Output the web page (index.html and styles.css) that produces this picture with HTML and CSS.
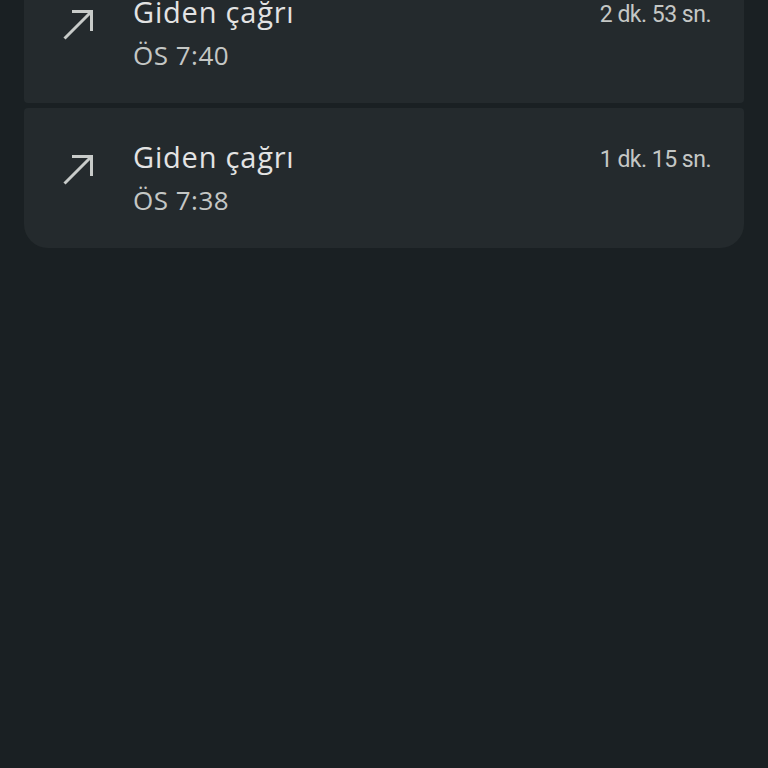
FILE: index.html
```html
<!DOCTYPE html>
<html lang="tr">
<head>
<meta charset="utf-8">
<link rel="stylesheet" href="styles.css">
</head>
<body>
<div class="list">
  <div class="card card-first">
    <div class="icon">
      <svg viewBox="0 0 30 30" width="30" height="30"><path d="M1.5 28.5 L28.5 1.5 M9 1.5 H28.5 V21" fill="none" stroke="#c8cbc9" stroke-width="3"/></svg>
    </div>
    <div class="text">
      <div class="title">Giden çağrı</div>
      <div class="sub">ÖS 7:40</div>
    </div>
    <div class="dur">2 dk. 53 sn.</div>
  </div>
  <div class="card card-last">
    <div class="icon">
      <svg viewBox="0 0 30 30" width="30" height="30"><path d="M1.5 28.5 L28.5 1.5 M9 1.5 H28.5 V21" fill="none" stroke="#c8cbc9" stroke-width="3"/></svg>
    </div>
    <div class="text">
      <div class="title">Giden çağrı</div>
      <div class="sub">ÖS 7:38</div>
    </div>
    <div class="dur">1 dk. 15 sn.</div>
  </div>
</div>
</body>
</html>
```
FILE: styles.css
```css
html, body {
  margin: 0;
  padding: 0;
  background: #1a2023;
  height: 100%;
  overflow: hidden;
}
body {
  font-family: "Open Sans", Roboto, sans-serif;
}
.list {
  margin: -37px 24px 0 24px;
  display: flex;
  flex-direction: column;
  gap: 5px;
}
.card {
  background: #242a2d;
  height: 140px;
  box-sizing: border-box;
  display: flex;
  align-items: flex-start;
  padding: 31px 33px 0 38px;
  border-radius: 4px;
}
.card-first {
  border-radius: 24px 24px 4px 4px;
}
.card-last {
  border-radius: 4px 4px 24px 24px;
}
.icon {
  width: 30px;
  height: 30px;
  margin-top: 16px;
  margin-left: 1px;
  flex: none;
}
.icon svg { display: block; }
.text {
  flex: 1;
  margin-left: 40px;
}
.title {
  font-size: 29px;
  line-height: 36px;
  letter-spacing: 0.8px;
  color: #e3e3e3;
}
.sub {
  font-size: 26px;
  line-height: 34px;
  letter-spacing: 0.5px;
  margin-top: 8px;
  color: #c4c7c5;
}
.dur {
  font-family: Roboto, sans-serif;
  font-size: 23px;
  line-height: 36px;
  letter-spacing: -0.5px;
  color: #c4c7c5;
  margin-top: 3px;
}
```
